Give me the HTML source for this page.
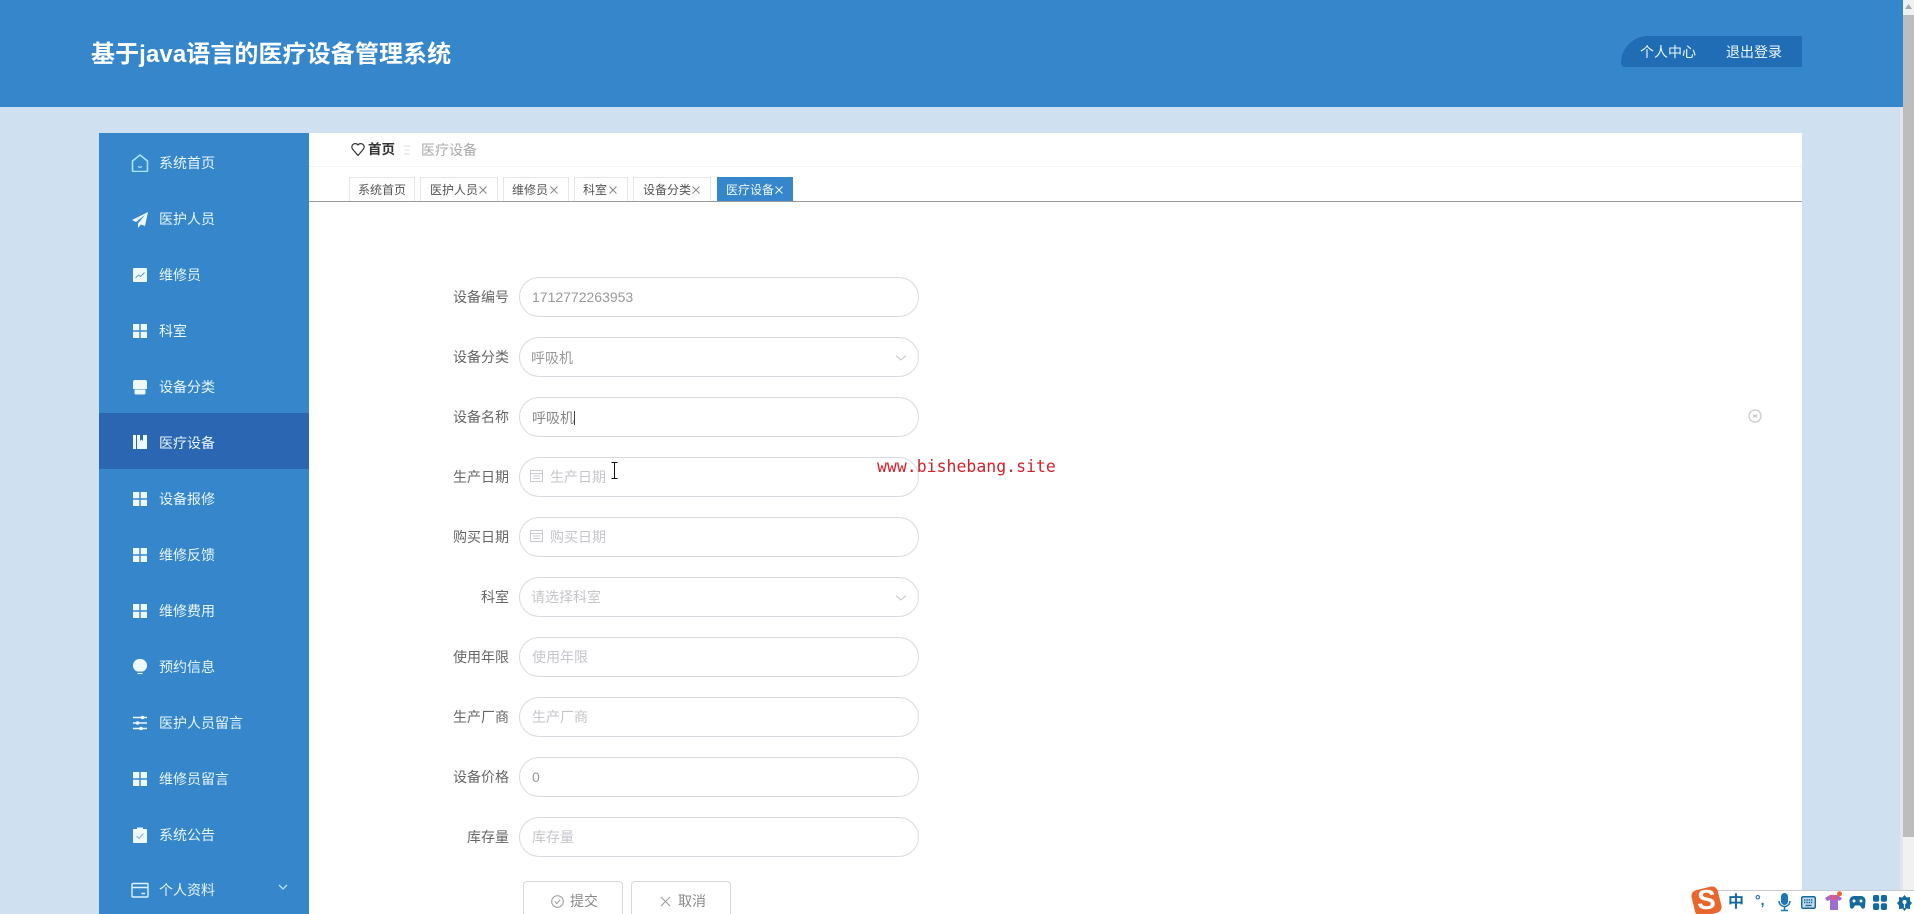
<!DOCTYPE html>
<html lang="zh">
<head>
<meta charset="utf-8">
<title>基于java语言的医疗设备管理系统</title>
<style>
html,body{margin:0;padding:0;width:1914px;height:914px;overflow:hidden;background:#cfe0f0;}
body{position:relative;font-family:"Liberation Sans","Noto Sans CJK SC",sans-serif;font-size:14px;filter:blur(.35px);}
div,span,svg{position:absolute;display:block;box-sizing:border-box;white-space:nowrap;}
.hdr{left:0;top:0;width:1903px;height:107px;background:#3586cb;}
.title{left:91px;top:37px;line-height:36px;font-size:24px;font-weight:bold;color:#fff;letter-spacing:.09px;}
.user{left:1621px;top:36px;width:181px;height:31px;background:#206db5;border-radius:28px 0 0 4px;}
.ut{top:36px;line-height:32px;color:#eaf7ff;font-size:14px;}
.side{left:99px;top:133px;width:210px;height:781px;background:#3586cb;}
.active{left:99px;top:413px;width:210px;height:56px;background:#2a66b2;}
.mi{left:159px;line-height:20px;color:#e8f6ff;font-size:14px;}
.ic{left:131px;width:18px;height:18px;}
.main{left:309px;top:133px;width:1493px;height:781px;background:#fff;}
.bline{left:309px;top:166px;width:1493px;height:1px;background:#f4f4f4;}
.tline{left:309px;top:201px;width:1493px;height:1px;background:#9a9a9a;}
.tab{top:177px;height:24px;background:#fff;border:1px solid #e6e6e6;border-bottom:0;line-height:24px;font-size:12px;color:#555;}
.tab span{top:0;}
.tab svg{top:8px;width:8px;height:8px;}
.tab.on{background:#3586cb;border-color:#3586cb;color:#eaf7ff;}
.lb{width:130px;left:379px;text-align:right;line-height:20px;color:#666;font-size:14px;}
.ip{left:519px;width:400px;height:40px;border:1px solid #d9dbe0;border-radius:20px;background:#fff;}
.v{line-height:20px;font-size:14px;color:#999;}
.ph{line-height:20px;font-size:14px;color:#c4c6cc;}
.btn{top:881px;width:100px;height:40px;border:1px solid #d6d8dd;border-radius:4px;background:#fff;}
.sb{left:1903px;top:0;width:11px;height:890px;background:#f1f1f1;}
.thumb{left:1903px;top:15px;width:11px;height:822px;background:#bdbdbd;}
.strip{left:1900px;top:107px;width:3px;height:783px;background:#dfe6f0;}
.wm{left:877px;top:456px;line-height:22px;font-family:"DejaVu Sans Mono","Liberation Mono",monospace;font-size:16.5px;color:#d0222c;}
.ime{left:1717px;top:890px;width:197px;height:24px;background:#fff;border-top:1px solid #c8ccd2;}
</style>
</head>
<body>
<div class="hdr"></div>
<div class="title">基于java语言的医疗设备管理系统</div>
<div class="user"></div>
<div class="ut" style="left:1640px">个人中心</div>
<div class="ut" style="left:1726px">退出登录</div>

<div class="side"></div>
<div class="active"></div>

<svg class="ic" style="top:154px" viewBox="0 0 18 18"><path d="M9 1 L16.500 7 V16.500 A1 1 0 0 1 15.500 17.500 H2.500 A1 1 0 0 1 1.500 16.500 V7 Z" fill="none" stroke="#a8e6ff" stroke-width="1.600" stroke-linejoin="round"/><path d="M7 12.500 Q9 14 11 12.500" fill="none" stroke="#a8e6ff" stroke-width="1.300"/></svg>
<div class="mi" style="top:153px">系统首页</div>
<svg class="ic" style="top:211px" viewBox="0 0 18 18"><path d="M17 1 L1 9 L5 11 L14 4 L7 12.500 L7 17 L10 13.500 L14 15 Z" fill="#eef9ff"/></svg>
<div class="mi" style="top:209px">医护人员</div>
<svg class="ic" style="top:266px" viewBox="0 0 18 18"><rect x="2" y="2" width="14" height="14" rx="1" fill="#eef9ff"/><path d="M4.500 12 L7.500 9 L9.500 10.500 L13.500 6.500" fill="none" stroke="#5e9fd6" stroke-width="1"/></svg>
<div class="mi" style="top:265px">维修员</div>
<svg class="ic" style="top:322px" viewBox="0 0 18 18"><path d="M2 2h6.300v6.300H2zM9.700 2H16v6.300H9.700zM2 9.700h6.300V16H2zM9.700 9.700H16V16H9.700z" fill="#eef9ff"/></svg>
<div class="mi" style="top:321px">科室</div>
<svg class="ic" style="top:378px" viewBox="0 0 18 18"><path d="M4 2 H14 A2 2 0 0 1 16 4 V11 H2 V4 A2 2 0 0 1 4 2 Z" fill="#eef9ff"/><path d="M3.500 11.500 H14.500 V15 A1.500 1.500 0 0 1 13 16.500 H5 A1.500 1.500 0 0 1 3.500 15 Z" fill="#eef9ff"/></svg>
<div class="mi" style="top:377px">设备分类</div>
<svg class="ic" style="top:433px" viewBox="0 0 18 18"><path d="M2 2h3v14H2zM6 2h3v6l1.500-1.500L12 8V2h4v14H6z" fill="#eef9ff"/></svg>
<div class="mi" style="top:433px">医疗设备</div>
<svg class="ic" style="top:490px" viewBox="0 0 18 18"><path d="M2 2h6.300v6.300H2zM9.700 2H16v6.300H9.700zM2 9.700h6.300V16H2zM9.700 9.700H16V16H9.700z" fill="#eef9ff"/></svg>
<div class="mi" style="top:489px">设备报修</div>
<svg class="ic" style="top:546px" viewBox="0 0 18 18"><path d="M2 2h6.300v6.300H2zM9.700 2H16v6.300H9.700zM2 9.700h6.300V16H2zM9.700 9.700H16V16H9.700z" fill="#eef9ff"/></svg>
<div class="mi" style="top:545px">维修反馈</div>
<svg class="ic" style="top:602px" viewBox="0 0 18 18"><path d="M2 2h6.300v6.300H2zM9.700 2H16v6.300H9.700zM2 9.700h6.300V16H2zM9.700 9.700H16V16H9.700z" fill="#eef9ff"/></svg>
<div class="mi" style="top:601px">维修费用</div>
<svg class="ic" style="top:658px" viewBox="0 0 18 18"><path d="M9 1 A6.500 6.500 0 0 1 12 13.500 H6 A6.500 6.500 0 0 1 9 1 Z" fill="#eef9ff"/><path d="M6.500 15.500 H11.500" stroke="#eef9ff" stroke-width="1.200"/></svg>
<div class="mi" style="top:657px">预约信息</div>
<svg class="ic" style="top:714px" viewBox="0 0 18 18"><path d="M2 3.500H16M2 9H16M2 14.500H16" stroke="#eef9ff" stroke-width="1.500"/><circle cx="11.500" cy="3.500" r="1.800" fill="#eef9ff"/><circle cx="6.500" cy="9" r="1.800" fill="#eef9ff"/><circle cx="10" cy="14.500" r="1.800" fill="#eef9ff"/></svg>
<div class="mi" style="top:713px">医护人员留言</div>
<svg class="ic" style="top:770px" viewBox="0 0 18 18"><path d="M2 2h6.300v6.300H2zM9.700 2H16v6.300H9.700zM2 9.700h6.300V16H2zM9.700 9.700H16V16H9.700z" fill="#eef9ff"/></svg>
<div class="mi" style="top:769px">维修员留言</div>
<svg class="ic" style="top:826px" viewBox="0 0 18 18"><path d="M3 3 H6 V1.500 H12 V3 H15 A1 1 0 0 1 16 4 V16 A1 1 0 0 1 15 17 H3 A1 1 0 0 1 2 16 V4 A1 1 0 0 1 3 3 Z" fill="#eef9ff"/><path d="M5.500 10 L8 12.500 L12.500 7.500" fill="none" stroke="#7fb2dc" stroke-width="1"/></svg>
<div class="mi" style="top:825px">系统公告</div>
<svg class="ic" style="top:881px" viewBox="0 0 18 18"><rect x="1" y="2.500" width="16" height="13.500" rx="1" fill="none" stroke="#dff3ff" stroke-width="1.400"/><path d="M1 6.500 H17 M10.500 12.500 H14" stroke="#dff3ff" stroke-width="1.400"/></svg>
<div class="mi" style="top:880px">个人资料</div>
<svg style="left:278px;top:884px;width:10px;height:7px" viewBox="0 0 10 7"><path d="M1 1 L5 5 L9 1" fill="none" stroke="#b8e4ff" stroke-width="1.300"/></svg>

<div class="main"></div>
<div class="bline"></div>
<svg style="left:351px;top:142px;width:14px;height:15px" viewBox="0 0 14 15"><path d="M7 13.500 L1.500 7 A3.400 3.400 0 0 1 7 3 A3.400 3.400 0 0 1 12.500 7 Z" fill="none" stroke="#333" stroke-width="1.200" stroke-linejoin="round"/></svg>
<div style="left:368px;top:140px;line-height:20px;font-weight:bold;color:#333;font-size:13.500px">首页</div>
<svg style="left:403px;top:145px;width:8px;height:10px" viewBox="0 0 8 10"><path d="M1 1H7M2 5H6M1 9H7" stroke="#ddd" stroke-width="1"/></svg>
<div style="left:421px;top:140px;line-height:20px;color:#aaa;font-size:14px">医疗设备</div>

<div class="tab" style="left:349px;width:66px"><span style="left:8px">系统首页</span></div>
<div class="tab" style="left:420px;width:78px"><span style="left:9px">医护人员</span><svg style="left:58px" viewBox="0 0 8 8"><path d="M.5 .5L7.500 7.500M7.500 .5L.5 7.500" stroke="#888" stroke-width="1"/></svg></div>
<div class="tab" style="left:503px;width:66px"><span style="left:8px">维修员</span><svg style="left:46px" viewBox="0 0 8 8"><path d="M.5 .5L7.500 7.500M7.500 .5L.5 7.500" stroke="#888" stroke-width="1"/></svg></div>
<div class="tab" style="left:574px;width:54px"><span style="left:8px">科室</span><svg style="left:34px" viewBox="0 0 8 8"><path d="M.5 .5L7.500 7.500M7.500 .5L.5 7.500" stroke="#888" stroke-width="1"/></svg></div>
<div class="tab" style="left:633px;width:78px"><span style="left:9px">设备分类</span><svg style="left:58px" viewBox="0 0 8 8"><path d="M.5 .5L7.500 7.500M7.500 .5L.5 7.500" stroke="#888" stroke-width="1"/></svg></div>
<div class="tab on" style="left:717px;width:76px"><span style="left:8px">医疗设备</span><svg style="left:57px" viewBox="0 0 8 8"><path d="M.5 .5L7.500 7.500M7.500 .5L.5 7.500" stroke="#eaf7ff" stroke-width="1"/></svg></div>
<div class="tline"></div>

<div class="lb" style="top:287px">设备编号</div>
<div class="ip" style="top:277px"></div>
<div class="v" style="left:532px;top:287px">1712772263953</div>

<div class="lb" style="top:347px">设备分类</div>
<div class="ip" style="top:337px"></div>
<div class="v" style="left:531px;top:348px">呼吸机</div>
<svg style="left:895px;top:354px;width:12px;height:8px" viewBox="0 0 12 8"><path d="M1 1.500 L6 6 L11 1.500" fill="none" stroke="#c4c6cc" stroke-width="1"/></svg>

<div class="lb" style="top:407px">设备名称</div>
<div class="ip" style="top:397px"></div>
<div class="v" style="left:532px;top:408px;color:#888">呼吸机</div>
<div style="left:574px;top:411px;width:1px;height:14px;background:#444"></div>

<div class="lb" style="top:467px">生产日期</div>
<div class="ip" style="top:457px"></div>
<svg style="left:530px;top:469px;width:13px;height:13px" viewBox="0 0 13 13"><path d="M.5 1.500H12.500V12.500H.5ZM.5 4.500H12.500M3 7H10M3 9.500H10" fill="none" stroke="#c8cacf" stroke-width="1"/></svg>
<div class="ph" style="left:550px;top:467px">生产日期</div>

<div class="lb" style="top:527px">购买日期</div>
<div class="ip" style="top:517px"></div>
<svg style="left:530px;top:529px;width:13px;height:13px" viewBox="0 0 13 13"><path d="M.5 1.500H12.500V12.500H.5ZM.5 4.500H12.500M3 7H10M3 9.500H10" fill="none" stroke="#c8cacf" stroke-width="1"/></svg>
<div class="ph" style="left:550px;top:527px">购买日期</div>

<div class="lb" style="top:587px">科室</div>
<div class="ip" style="top:577px"></div>
<div class="ph" style="left:531px;top:587px">请选择科室</div>
<svg style="left:895px;top:594px;width:12px;height:8px" viewBox="0 0 12 8"><path d="M1 1.500 L6 6 L11 1.500" fill="none" stroke="#c4c6cc" stroke-width="1"/></svg>

<div class="lb" style="top:647px">使用年限</div>
<div class="ip" style="top:637px"></div>
<div class="ph" style="left:532px;top:647px">使用年限</div>

<div class="lb" style="top:707px">生产厂商</div>
<div class="ip" style="top:697px"></div>
<div class="ph" style="left:532px;top:707px">生产厂商</div>

<div class="lb" style="top:767px">设备价格</div>
<div class="ip" style="top:757px"></div>
<div class="v" style="left:532px;top:767px">0</div>

<div class="lb" style="top:827px">库存量</div>
<div class="ip" style="top:817px"></div>
<div class="ph" style="left:532px;top:827px">库存量</div>

<div class="btn" style="left:523px"></div>
<svg style="left:551px;top:895px;width:13px;height:13px" viewBox="0 0 13 13"><circle cx="6.500" cy="6.500" r="5.800" fill="none" stroke="#999" stroke-width="1"/><path d="M3.800 6.500 L5.800 8.500 L9.300 4.800" fill="none" stroke="#999" stroke-width="1"/></svg>
<div style="left:570px;top:891px;line-height:20px;color:#8a8a8a;font-size:14px">提交</div>
<div class="btn" style="left:631px"></div>
<svg style="left:660px;top:896px;width:11px;height:11px" viewBox="0 0 11 11"><path d="M1 1 L10 10 M10 1 L1 10" stroke="#999" stroke-width="1"/></svg>
<div style="left:678px;top:891px;line-height:20px;color:#8a8a8a;font-size:14px">取消</div>

<svg style="left:1748px;top:409px;width:14px;height:14px" viewBox="0 0 14 14"><circle cx="7" cy="7" r="6" fill="none" stroke="#ccc" stroke-width="1.300"/><path d="M5 5.500 L9 8.500 M9 5.500 L5 8.500" stroke="#bbb" stroke-width="1"/></svg>

<div class="wm">www.bishebang.site</div>

<svg style="left:609px;top:462px;width:11px;height:17px" viewBox="0 0 11 17"><path d="M2.500 .5H8.500M2.500 16.500H8.500M5.500 .5V16.500" stroke="#111" stroke-width="1" fill="none"/></svg>

<div class="strip"></div>
<div class="sb"></div>
<div class="thumb"></div>
<svg style="left:1905px;top:4px;width:7px;height:5px" viewBox="0 0 7 5"><path d="M3.500 0 L7 5 H0 Z" fill="#a8a8a8"/></svg>

<div class="ime"></div>
<div style="left:1693px;top:888px;width:27px;height:27px;background:#e9672c;border-radius:6px;transform:rotate(-14deg)"></div>
<div style="left:1693px;top:883px;width:27px;line-height:34px;text-align:center;color:#fff;font-size:28px;font-weight:bold">S</div>
<div style="left:1728px;top:893px;line-height:20px;color:#15699f;font-size:16px;font-weight:bold">中</div>
<div style="left:1755px;top:890px;line-height:20px;color:#15699f;font-size:14px;font-weight:bold">°,</div>
<svg style="left:1778px;top:893px;width:13px;height:19px" viewBox="0 0 13 19"><rect x="3" y="0" width="7" height="12" rx="3.500" fill="#1c78b4"/><path d="M1 8 A5.500 5.500 0 0 0 12 8 M6.500 14 V17 M3 17.500 H10" fill="none" stroke="#1c78b4" stroke-width="1.500"/></svg>
<svg style="left:1801px;top:896px;width:15px;height:13px" viewBox="0 0 15 13"><rect x=".7" y=".7" width="13.600" height="11.600" rx="1.500" fill="#c6dcec" stroke="#15699f" stroke-width="1.500"/><path d="M3 4H12M3 6.500H12" stroke="#15699f" stroke-width="1.500" stroke-dasharray="1.500 .8"/><path d="M4.500 9.500H10.500" stroke="#15699f" stroke-width="1.400"/></svg>
<svg style="left:1825px;top:891px;width:18px;height:20px" viewBox="0 0 18 20"><path d="M0 7 L5 4 H12 L17 7 L15 10 L13 9 V19 H5 V9 L2 10 Z" fill="#9a6fcf"/><path d="M5 4 H12 L13 9 H5 Z" fill="#d45a9a"/><circle cx="14.500" cy="2.800" r="2.500" fill="#e8673a"/></svg>
<svg style="left:1849px;top:895px;width:17px;height:15px" viewBox="0 0 17 15"><path d="M5 1 H12 A4.500 4.500 0 0 1 16.500 6 L16 12 A2 2 0 0 1 12.500 13 L11 10.500 H6 L4.500 13 A2 2 0 0 1 1 12 L.5 6 A4.500 4.500 0 0 1 5 1 Z" fill="#15699f"/><circle cx="5" cy="6" r="1.500" fill="#fff"/><circle cx="12" cy="6" r="1.500" fill="#fff"/></svg>
<svg style="left:1873px;top:895px;width:14px;height:15px" viewBox="0 0 14 15"><rect x="0" y="0" width="6.200" height="6.800" rx="2" fill="#15699f"/><rect x="7.800" y="0" width="6.200" height="6.800" rx="2" fill="#15699f"/><rect x="0" y="8.200" width="6.200" height="6.800" rx="2" fill="#15699f"/><rect x="7.800" y="8.200" width="6.200" height="6.800" rx="2" fill="#15699f"/></svg>
<svg style="left:1897px;top:895px;width:15px;height:16px" viewBox="0 0 15 16"><path d="M7.500 0 L9.500 2.500 L13 2 L13 6 L15 8 L13 10.500 L13 14 L9.500 13.500 L7.500 16 L5.500 13.500 L2 14 L2 10.500 L0 8 L2 6 L2 2 L5.500 2.500 Z" fill="#15699f"/><circle cx="7.500" cy="7" r="2" fill="#fff"/><path d="M7.500 9 V13" stroke="#fff" stroke-width="1.200"/></svg>
</body>
</html>
